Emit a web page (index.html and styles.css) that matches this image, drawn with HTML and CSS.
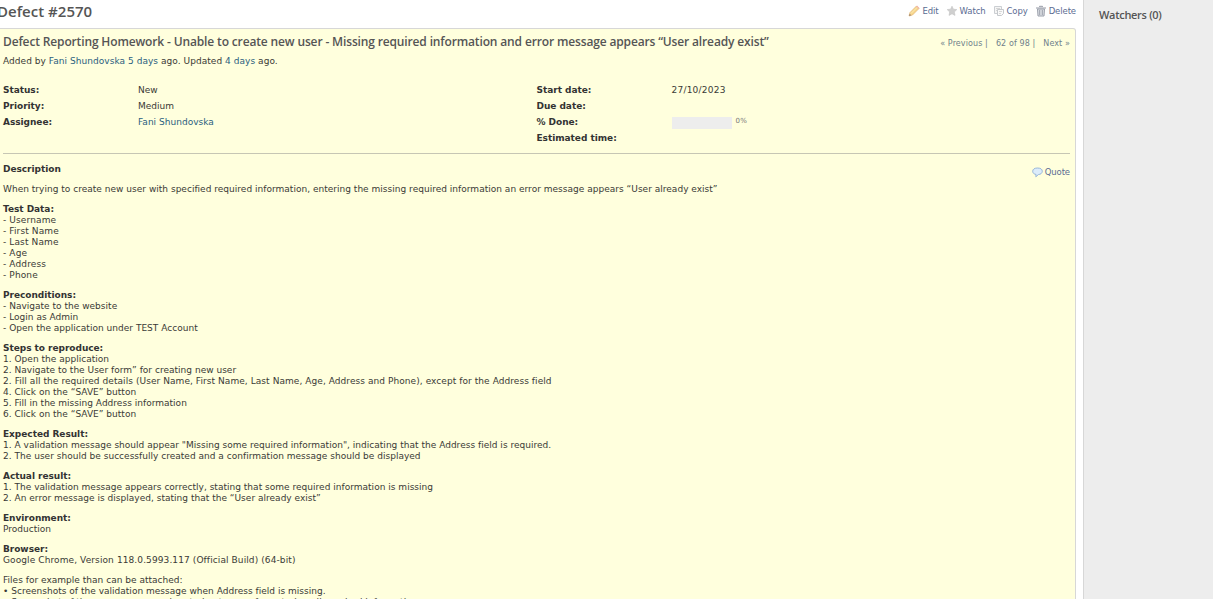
FILE: index.html
```html
<!DOCTYPE html>
<html lang="en">
<head>
<meta charset="utf-8">
<title>Defect #2570</title>
<link rel="stylesheet" href="styles.css">
</head>
<body>
<div class="page">
<main class="content">
  <header class="topbar">
    <h2 class="page-title">Defect #2570</h2>
    <nav class="actions">
      <a class="action"><svg width="12" height="12" viewBox="0 0 12 12"><path d="M1 11l1-3.500 6.500-6.500 2.500 2.500L4.500 10z" fill="#f7d58c" stroke="#e3b778" stroke-width=".7"/><path d="M8 1.500L9 .6l2.400 2.400-.9 1z" fill="#efb5a8"/><path d="M3 8.500L9 2.500" stroke="#fbedb5"/><path d="M1 11l.7-2.300 1.600 1.600z" fill="#9b8371"/></svg><span>Edit</span></a>
      <a class="action"><svg width="12" height="12" viewBox="0 0 12 12"><path d="M6 1.200l1.400 3 3.400.4-2.500 2.400.7 3.400L6 8.800 3 10.400l.7-3.400-2.500-2.400 3.400-.4z" fill="#cfcfcf" stroke="#c2c2c2" stroke-width=".6"/></svg><span>Watch</span></a>
      <a class="action"><svg width="12" height="12" viewBox="0 0 12 12"><path d="M1.500 1.500h7v7h-7z" fill="#f5f5f5" stroke="#cbced2"/><path d="M3 3.500h4M3 5.500h2" stroke="#d5d5d5"/><path d="M4.500 4.500h6v4l-2 2h-4z" fill="#fafafa" stroke="#c5c8cc"/><path d="M6 6.500h3M6 8.500h2" stroke="#d8d8d8"/></svg><span>Copy</span></a>
      <a class="action"><svg width="12" height="12" viewBox="0 0 12 12"><path d="M2.500 4h7l-.5 7H3z" fill="#dcdfe4" stroke="#9ca1ac"/><path d="M1 3h10M4.500 2V1.300h3V2" fill="none" stroke="#9499a5"/><path d="M4.700 5v5M7.300 5v5" stroke="#9ca1ac"/></svg><span>Delete</span></a>
    </nav>
  </header>
  <section class="issue">
    <div class="subject">
      <h3 class="t-subject">Defect Reporting Homework - Unable to create new user - Missing required information and error message appears “User already exist”</h3>
      <div class="pager"><span>« Previous |</span><span>62 of 98 |</span><span>Next »</span></div>
    </div>
    <p class="author">Added by <a>Fani Shundovska</a> <a>5 days</a> ago. Updated <a>4 days</a> ago.</p>
    <div class="attributes">
      <dl class="attrs">
        <dt>Status:</dt><dd>New</dd>
        <dt>Priority:</dt><dd>Medium</dd>
        <dt>Assignee:</dt><dd><a>Fani Shundovska</a></dd>
      </dl>
      <dl class="attrs">
        <dt>Start date:</dt><dd class="date">27/10/2023</dd>
        <dt>Due date:</dt><dd></dd>
        <dt>% Done:</dt><dd class="progress"><span class="bar"></span><span class="percent">0%</span></dd>
        <dt>Estimated time:</dt><dd></dd>
      </dl>
    </div>
    <div class="description">
      <div class="desc-head"><strong>Description</strong>
        <a class="quote"><svg width="11" height="11" viewBox="0 0 11 11"><path d="M5.500 1C8.500 1 10.300 2.200 10.300 4.200S8.500 7.500 6.500 7.500L3.800 9.800 4 7.400C2 7.200.7 6 .7 4.200.7 2.200 2.600 1 5.500 1z" fill="#dcecfa" stroke="#8fb0d6" stroke-width=".9"/></svg><span>Quote</span></a>
      </div>
      <p>When trying to create new user with specified required information, entering the missing required information an error message appears “User already exist”</p>
      <p class="list"><strong>Test Data:</strong><br>- Username<br>- First Name<br>- Last Name<br>- Age<br>- Address<br>- Phone</p>
      <p><strong>Preconditions:</strong><br>- Navigate to the website<br>- Login as Admin<br>- Open the application under TEST Account</p>
      <p><strong>Steps to reproduce:</strong><br>1. Open the application<br>2. Navigate to the User form” for creating new user<br><span class="details">2. Fill all the required details (User Name, First Name, Last Name, Age, Address and Phone), except for the Address field</span><br>4. Click on the “SAVE” button<br>5. Fill in the missing Address information<br>6. Click on the “SAVE” button</p>
      <p><strong>Expected Result:</strong><br>1. A validation message should appear "Missing some required information", indicating that the Address field is required.<br>2. The user should be successfully created and a confirmation message should be displayed</p>
      <p><strong>Actual result:</strong><br>1. The validation message appears correctly, stating that some required information is missing<br>2. An error message is displayed, stating that the “User already exist”</p>
      <p><strong>Environment:</strong><br>Production</p>
      <p><strong>Browser:</strong><br><span class="version">Google Chrome, Version 118.0.5993.117 (Official Build) (64-bit)</span></p>
      <p>Files for example than can be attached:<br>• Screenshots of the validation message when Address field is missing.<br>• Screenshot of the error message when trying to save for entering all required information</p>
    </div>
  </section>
</main>
<aside class="sidebar"><h3 class="t-watchers">Watchers (0)</h3></aside>
</div>
</body>
</html>
```
FILE: styles.css
```css
* { box-sizing: border-box; }
html, body { margin: 0; height: 599px; overflow: hidden; }
body { background: #fff; color: #3a3a36; font: 9px/11px Verdana, "DejaVu Sans", sans-serif; letter-spacing: .018px; }
h2, h3, p, dl, dd { margin: 0; }
a { color: #2a6080; }
.page { display: flex; height: 599px; overflow: hidden; }
.content { width: 1083px; flex: none; display: flex; flex-direction: column; }
.sidebar { flex: 1; background: #ededed; border-left: 1px solid #d7d7d7; padding: 6px 0 0 15px; }
.topbar { display: flex; justify-content: space-between; height: 28px; flex: none; padding-right: 7px; }
h2, h3 { font-family: "Trebuchet MS", "Open Sans", sans-serif; font-weight: 600; color: #555; white-space: nowrap; }
.page-title { font-size: 15px; line-height: 23px; margin-left: -3px; }
.actions { display: flex; gap: 7px; padding-top: 5px; }
.action, .quote { display: flex; gap: 2px; align-items: center; height: 12px; color: #5b6c92; font-size: 8.500px; letter-spacing: -.1px; }
.issue { background: #ffffdd; border: 1px solid #d7d7d7; border-left: 0; border-radius: 0 3px 0 0; width: 1076px; flex: none; padding: 4px 5px 0 3px; }
.subject { display: flex; justify-content: space-between; height: 18px; }
.t-subject { font-size: 12px; line-height: 18px; letter-spacing: -.145px; }
.pager { display: flex; gap: 8px; color: #6f7f8b; font-size: 8px; line-height: 22px; letter-spacing: .1px; }
.author { line-height: 20px; height: 18px; letter-spacing: .045px; }
.attributes { display: flex; padding: 13px 0 7px; border-bottom: 1px solid #c6c6b4; }
.attrs { width: 534px; display: grid; grid-template-columns: 135px 1fr; grid-auto-rows: 16px; line-height: 16px; }
dt, strong { font-weight: 700; color: #333; letter-spacing: -.04px; }
.date { letter-spacing: .22px; }
.progress { display: flex; gap: 4px; }
.bar { width: 60px; height: 12px; margin-top: 3px; background: #ededed; }
.percent { font-size: 7px; line-height: 14px; color: #777; letter-spacing: .3px; }
.desc-head { display: flex; justify-content: space-between; padding-top: 10px; height: 30px; }
.quote { margin-top: 2px; }
.description p { margin-bottom: 9px; white-space: nowrap; }
.description .list { letter-spacing: .12px; }
.details { letter-spacing: .065px; }
.version { letter-spacing: .1px; }
.t-watchers { font-size: 11px; line-height: 18px; letter-spacing: -.3px; }
```
